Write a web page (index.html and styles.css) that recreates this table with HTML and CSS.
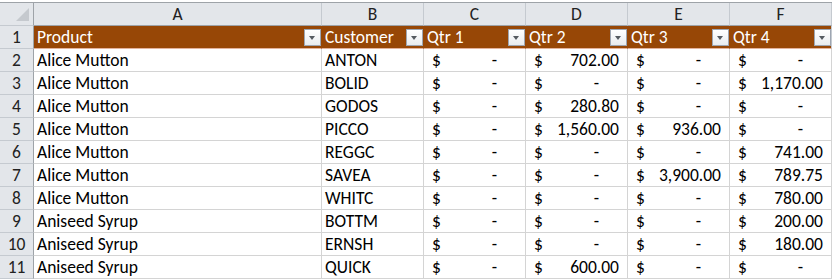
FILE: index.html
```html
<!DOCTYPE html>
<html>
<head>
<meta charset="utf-8">
<link rel="stylesheet" href="styles.css">
</head>
<body>
<div class="sheet">
  <div class="row hdr">
    <div class="rh corner"><span class="tri"></span></div>
    <div class="ch">A</div><div class="ch">B</div><div class="ch">C</div><div class="ch">D</div><div class="ch">E</div><div class="ch">F</div>
  </div>
  <div class="row thead">
    <div class="rh">1</div>
    <div class="th">Product<span class="dd"></span></div>
    <div class="th">Customer<span class="dd"></span></div>
    <div class="th">Qtr 1<span class="dd"></span></div>
    <div class="th">Qtr 2<span class="dd"></span></div>
    <div class="th">Qtr 3<span class="dd"></span></div>
    <div class="th last">Qtr 4<span class="dd"></span></div>
  </div>
  <div class="row"><div class="rh">2</div><div class="c">Alice Mutton</div><div class="c">ANTON</div><div class="c acc"><span>$</span><span class="dash">-</span></div><div class="c acc"><span>$</span><span>702.00</span></div><div class="c acc"><span>$</span><span class="dash">-</span></div><div class="c acc"><span>$</span><span class="dash">-</span></div></div>
  <div class="row"><div class="rh">3</div><div class="c">Alice Mutton</div><div class="c">BOLID</div><div class="c acc"><span>$</span><span class="dash">-</span></div><div class="c acc"><span>$</span><span class="dash">-</span></div><div class="c acc"><span>$</span><span class="dash">-</span></div><div class="c acc"><span>$</span><span>1,170.00</span></div></div>
  <div class="row"><div class="rh">4</div><div class="c">Alice Mutton</div><div class="c">GODOS</div><div class="c acc"><span>$</span><span class="dash">-</span></div><div class="c acc"><span>$</span><span>280.80</span></div><div class="c acc"><span>$</span><span class="dash">-</span></div><div class="c acc"><span>$</span><span class="dash">-</span></div></div>
  <div class="row"><div class="rh">5</div><div class="c">Alice Mutton</div><div class="c">PICCO</div><div class="c acc"><span>$</span><span class="dash">-</span></div><div class="c acc"><span>$</span><span>1,560.00</span></div><div class="c acc"><span>$</span><span>936.00</span></div><div class="c acc"><span>$</span><span class="dash">-</span></div></div>
  <div class="row"><div class="rh">6</div><div class="c">Alice Mutton</div><div class="c">REGGC</div><div class="c acc"><span>$</span><span class="dash">-</span></div><div class="c acc"><span>$</span><span class="dash">-</span></div><div class="c acc"><span>$</span><span class="dash">-</span></div><div class="c acc"><span>$</span><span>741.00</span></div></div>
  <div class="row"><div class="rh">7</div><div class="c">Alice Mutton</div><div class="c">SAVEA</div><div class="c acc"><span>$</span><span class="dash">-</span></div><div class="c acc"><span>$</span><span class="dash">-</span></div><div class="c acc"><span>$</span><span>3,900.00</span></div><div class="c acc"><span>$</span><span>789.75</span></div></div>
  <div class="row"><div class="rh">8</div><div class="c">Alice Mutton</div><div class="c">WHITC</div><div class="c acc"><span>$</span><span class="dash">-</span></div><div class="c acc"><span>$</span><span class="dash">-</span></div><div class="c acc"><span>$</span><span class="dash">-</span></div><div class="c acc"><span>$</span><span>780.00</span></div></div>
  <div class="row"><div class="rh">9</div><div class="c">Aniseed Syrup</div><div class="c">BOTTM</div><div class="c acc"><span>$</span><span class="dash">-</span></div><div class="c acc"><span>$</span><span class="dash">-</span></div><div class="c acc"><span>$</span><span class="dash">-</span></div><div class="c acc"><span>$</span><span>200.00</span></div></div>
  <div class="row"><div class="rh">10</div><div class="c">Aniseed Syrup</div><div class="c">ERNSH</div><div class="c acc"><span>$</span><span class="dash">-</span></div><div class="c acc"><span>$</span><span class="dash">-</span></div><div class="c acc"><span>$</span><span class="dash">-</span></div><div class="c acc"><span>$</span><span>180.00</span></div></div>
  <div class="row"><div class="rh">11</div><div class="c">Aniseed Syrup</div><div class="c">QUICK</div><div class="c acc"><span>$</span><span class="dash">-</span></div><div class="c acc"><span>$</span><span>600.00</span></div><div class="c acc"><span>$</span><span class="dash">-</span></div><div class="c acc"><span>$</span><span class="dash">-</span></div></div>
</div>
</body>
</html>
```
FILE: styles.css
```css
html, body { margin: 0; padding: 0; background: #ffffff; }
body { padding-top: 2px; font-family: "Carlito", "Liberation Sans", Arial, sans-serif; font-size: 17.5px; color: #000; }
.sheet { width: 832px; border-top: 1px solid #9ea3a8; }
.row { display: grid; grid-template-columns: 34px 288px 102px 102px 102px 102px 102px; height: 23px; }
.row > div { box-sizing: border-box; height: 23px; line-height: 22px; border-right: 1px solid #d4d4d4; border-bottom: 1px solid #d4d4d4; white-space: nowrap; overflow: hidden; }
.rh { background: #e3e6ea; color: #222; text-align: center; border-right-color: #9ea3a8 !important; border-bottom-color: #c5cad0 !important; }
.hdr > div { border-bottom-color: #9ea3a8; }
.ch { background: #e3e6ea; color: #222; text-align: center; border-right-color: #c5cad0 !important; border-bottom-color: #9ea3a8 !important; }
.corner { position: relative; }
.tri { position: absolute; right: 4px; bottom: 4px; width: 0; height: 0; border-left: 13px solid transparent; border-bottom: 13px solid #c5c9ce; }
.th { background: #974706; color: #fff; padding-left: 3px; position: relative; border-right: 1px solid #974706 !important; border-bottom-color: #e3b39c !important; }
.th.last { border-right-color: #c5cad0 !important; }
.dd { position: absolute; right: 0; top: 3px; width: 17px; height: 17px; box-sizing: border-box; border: 1px solid #9ea6b2; background: linear-gradient(#ffffff, #e9ecef); }
.dd::after { content: ""; position: absolute; left: 4px; top: 6px; border-left: 3.5px solid transparent; border-right: 3.5px solid transparent; border-top: 4px solid #555a60; }
.c { padding-left: 3px; }
.acc { display: flex; justify-content: space-between; padding-left: 8px; padding-right: 8px; }
.dash { margin-right: 20px; }
```
